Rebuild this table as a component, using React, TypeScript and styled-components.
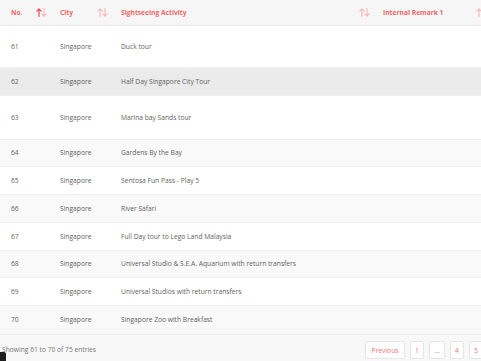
import React from "react";
import styled, { createGlobalStyle } from "styled-components";

const Global = createGlobalStyle`
  html, body { margin: 0; padding: 0; background: #ffffff; overflow: hidden; }
  body { font-family: "Open Sans", "Liberation Sans", sans-serif; }
`;

const Page = styled.div`
  width: 520px;
  height: 361px;
  display: flex;
  flex-direction: column;
  background: #f8f8f8;
  position: relative;
`;

const Table = styled.table`
  width: 490px;
  table-layout: fixed;
  border-collapse: collapse;
  background: #ffffff;
`;

const HeadRow = styled.tr`
  height: 25px;
  background: #f6f6f6;
  border-bottom: 1px solid #e9e9e9;
`;

const Th = styled.th<{ $first?: boolean }>`
  padding: 1px 3px 0 ${(p) => (p.$first ? 11 : 10)}px;
  text-align: left;
  font-size: 6.7px;
  font-weight: 700;
  color: #f2676a;
  vertical-align: middle;
`;

const ThInner = styled.div`
  display: flex;
  align-items: center;
  justify-content: space-between;
  white-space: nowrap;
`;

const Row = styled.tr<{ $h: number; $bg: string }>`
  height: ${(p) => p.$h}px;
  background: ${(p) => p.$bg};
  border-top: 1px solid #f1f1f1;
`;

const Td = styled.td<{ $first?: boolean }>`
  padding: 0 3px 0 ${(p) => (p.$first ? 11 : 10)}px;
  font-size: 6.7px;
  color: #5f5f5f;
  vertical-align: middle;
  white-space: nowrap;
`;

const Footer = styled.div`
  display: flex;
  align-items: center;
  justify-content: space-between;
  padding: 6px 0 3px 2px;
  width: 485px;
  border-top: 1px solid #eeeeee;
  margin-top: 1px;
`;

const Info = styled.span`
  font-size: 6.7px;
  color: #777777;
  margin-top: -1px;
`;

const Pager = styled.div`
  display: flex;
  gap: 5px;
  margin-right: 4px;
`;

const PageBtn = styled.span<{ $w: number; $muted?: boolean }>`
  width: ${(p) => p.$w}px;
  height: 18px;
  box-sizing: border-box;
  display: flex;
  align-items: center;
  justify-content: center;
  background: #ffffff;
  border: 1px solid #e6e6e6;
  border-radius: 2px;
  font-size: 6.7px;
  color: ${(p) => (p.$muted ? "#888888" : "#f07173")};
`;

const Badge = styled.div`
  position: absolute;
  left: 0;
  top: 352px;
  width: 6px;
  height: 9px;
  background: #1e1e1e;
  border-top-right-radius: 2px;
`;

const SortIcon: React.FC<{ up?: boolean }> = ({ up }) => (
  <svg width="11" height="9" viewBox="0 0 11 9">
    <g fill="none" strokeWidth="1.2" strokeLinecap="round" strokeLinejoin="round">
      <path d="M3 8.5V1M0.8 3.2L3 1L5.2 3.2" stroke={up ? "#f04e52" : "#f7bcbd"} />
      <path d="M8 0.5V8M5.8 5.8L8 8L10.2 5.8" stroke="#f7bcbd" />
    </g>
  </svg>
);

const rows: [string, string, number, string][] = [
  ["61", "Duck tour", 42, "#ffffff"],
  ["62", "Half Day Singapore City Tour", 28, "#ebebeb"],
  ["63", "Marina bay Sands tour", 44, "#ffffff"],
  ["64", "Gardens By the Bay", 27, "#f9f9f9"],
  ["65", "Sentosa Fun Pass - Play 5", 28, "#ffffff"],
  ["66", "River Safari", 28, "#f9f9f9"],
  ["67", "Full Day tour to Lego Land Malaysia", 28, "#ffffff"],
  ["68", "Universal Studio & S.E.A. Aquarium with return transfers", 27, "#f9f9f9"],
  ["69", "Universal Studios with return transfers", 28, "#ffffff"],
  ["70", "Singapore Zoo with Breakfast", 28, "#f9f9f9"],
];

export default function App() {
  return (
    <Page>
      <Global />
      <Table>
        <colgroup>
          <col style={{ width: 50 }} />
          <col style={{ width: 61 }} />
          <col style={{ width: 262 }} />
          <col style={{ width: 117 }} />
        </colgroup>
        <thead>
          <HeadRow>
            <Th $first>
              <ThInner>
                No. <SortIcon up />
              </ThInner>
            </Th>
            <Th>
              <ThInner>
                City <SortIcon />
              </ThInner>
            </Th>
            <Th>
              <ThInner>
                Sightseeing Activity <SortIcon />
              </ThInner>
            </Th>
            <Th>
              <ThInner>
                Internal Remark 1 <SortIcon />
              </ThInner>
            </Th>
          </HeadRow>
        </thead>
        <tbody>
          {rows.map(([n, a, h, bg]) => (
            <Row key={n} $h={h} $bg={bg}>
              <Td $first>{n}</Td>
              <Td>Singapore</Td>
              <Td>{a}</Td>
              <Td></Td>
            </Row>
          ))}
        </tbody>
      </Table>
      <Footer>
        <Info>Showing 61 to 70 of 75 entries</Info>
        <Pager>
          <PageBtn $w={40}>Previous</PageBtn>
          <PageBtn $w={14}>1</PageBtn>
          <PageBtn $w={16} $muted>…</PageBtn>
          <PageBtn $w={14}>4</PageBtn>
          <PageBtn $w={14}>5</PageBtn>
        </Pager>
      </Footer>
      <Badge />
    </Page>
  );
}
